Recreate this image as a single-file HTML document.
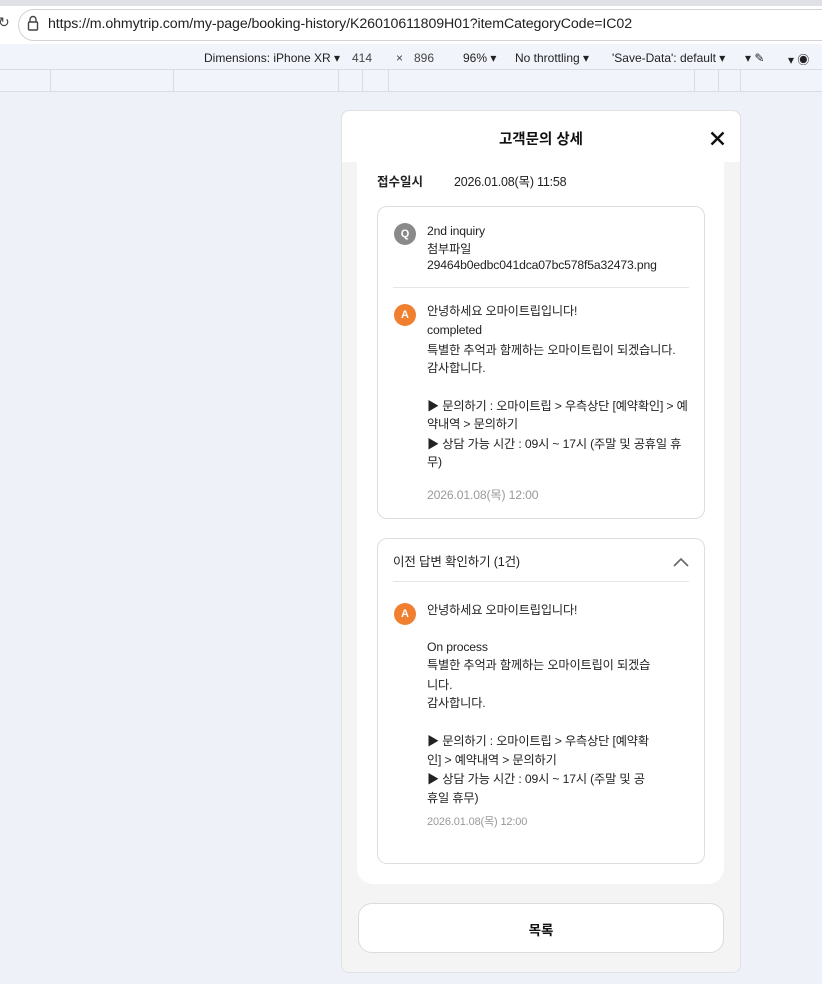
<!DOCTYPE html>
<html><head><meta charset="utf-8"><style>
*{margin:0;padding:0;box-sizing:border-box}
body{width:822px;height:984px;position:relative;background:#eef1f8;font-family:"Liberation Sans","Noto Sans CJK KR",sans-serif;color:#222;overflow:hidden}
.a{position:absolute;white-space:nowrap}
.t{position:absolute;white-space:nowrap;font-size:12.2px;letter-spacing:-0.15px;line-height:19px;color:#222}
.vl{position:absolute;top:70px;height:21px;width:1px;background:#d6dde9}
.av{position:absolute;width:22px;height:22px;border-radius:50%;color:#fff;font-weight:bold;font-size:11px;text-align:center;line-height:22px}
</style></head><body>
<div class="a" style="left:0;top:0;width:822px;height:6px;background:#dfe1e5"></div>
<div class="a" style="left:0;top:6px;width:822px;height:38px;background:#fff"></div>
<div class="a" style="left:18px;top:9px;width:820px;height:32px;border:1px solid #d0d3d8;border-radius:16px;background:#fff"></div>
<div class="a" style="left:-2px;top:14px;font-size:14px;color:#444">↻</div>
<svg class="a" style="left:27px;top:15px" width="12" height="16" viewBox="0 0 12 16"><path d="M3 7V4.5a3 3 0 0 1 6 0V7" fill="none" stroke="#444" stroke-width="1.4"/><rect x="1.5" y="7" width="9" height="8" rx="1" fill="none" stroke="#444" stroke-width="1.4"/></svg>
<div class="a" style="left:48px;top:16px;font-size:14.2px;letter-spacing:-0.1px;color:#222">https://m.ohmytrip.com/my-page/booking-history/K26010611809H01?itemCategoryCode=IC02</div>
<div class="a" style="left:0;top:44px;width:822px;height:26px;background:#f1f4fa;border-bottom:1px solid #d6dde9"></div>
<div class="a" style="left:204px;top:51px;font-size:12px;color:#222">Dimensions: iPhone XR ▾</div>
<div class="a" style="left:352px;top:51px;font-size:12px;color:#444">414</div>
<div class="a" style="left:396px;top:51px;font-size:12px;color:#444">×</div>
<div class="a" style="left:414px;top:51px;font-size:12px;color:#444">896</div>
<div class="a" style="left:463px;top:51px;font-size:12px;color:#222">96% ▾</div>
<div class="a" style="left:515px;top:51px;font-size:12px;color:#222">No throttling ▾</div>
<div class="a" style="left:612px;top:51px;font-size:12px;color:#222">'Save-Data': default ▾</div>
<div class="a" style="left:745px;top:51px;font-size:12px;color:#222">▾ ✎</div>
<div class="a" style="left:788px;top:51px;font-size:12px;color:#222">▾ ◉</div>
<div class="a" style="left:0;top:70px;width:822px;height:22px;background:#f1f4fa;border-bottom:1px solid #d6dde9"></div>
<div class="vl" style="left:50px"></div><div class="vl" style="left:173px"></div><div class="vl" style="left:338px"></div><div class="vl" style="left:362px"></div><div class="vl" style="left:388px"></div><div class="vl" style="left:694px"></div><div class="vl" style="left:718px"></div><div class="vl" style="left:740px"></div>

<div class="a" style="left:341px;top:110px;width:400px;height:863px;background:#f4f4f4;border:1px solid #e2e2e2;border-radius:8px"></div>
<div class="a" style="left:342px;top:111px;width:398px;height:51px;background:#fff;border-radius:8px 8px 0 0"></div>
<div class="a" style="left:342px;top:128px;width:398px;text-align:center;font-size:14.5px;font-weight:bold;color:#111">고객문의 상세</div>
<svg class="a" style="left:710px;top:131px" width="15" height="15" viewBox="0 0 15 15"><path d="M1.5 1.5L13.5 13.5M13.5 1.5L1.5 13.5" stroke="#111" stroke-width="2.4"/></svg>
<div class="a" style="left:357px;top:162px;width:367px;height:722px;background:#fff;border-radius:0 0 16px 16px"></div>
<div class="a" style="left:377px;top:171px;font-size:12.5px;font-weight:bold;color:#222">접수일시</div>
<div class="a" style="left:454px;top:171px;font-size:12.5px;letter-spacing:-0.2px;color:#222">2026.01.08(목) 11:58</div>

<div class="a" style="left:377px;top:206px;width:328px;height:313px;border:1px solid #dedede;border-radius:10px"></div>
<div class="av" style="left:394px;top:223px;background:#8a8a8a">Q</div>
<div class="t" style="left:427px;top:222px">2nd inquiry</div>
<div class="t" style="left:427px;top:240px">첨부파일</div>
<div class="t" style="left:427px;top:256px">29464b0edbc041dca07bc578f5a32473.png</div>
<div class="a" style="left:393px;top:287px;width:296px;height:1px;background:#e5e5e5"></div>
<div class="av" style="left:394px;top:304px;background:#f08030">A</div>
<div class="t" style="left:427px;top:302px">안녕하세요 오마이트립입니다!</div>
<div class="t" style="left:427px;top:321px">completed</div>
<div class="t" style="left:427px;top:341px">특별한 추억과 함께하는 오마이트립이 되겠습니다.</div>
<div class="t" style="left:427px;top:359px">감사합니다.</div>
<div class="t" style="left:427px;top:397px">▶ 문의하기 : 오마이트립 &gt; 우측상단 [예약확인] &gt; 예</div>
<div class="t" style="left:427px;top:415px">약내역 &gt; 문의하기</div>
<div class="t" style="left:427px;top:435px">▶ 상담 가능 시간 : 09시 ~ 17시 (주말 및 공휴일 휴</div>
<div class="t" style="left:427px;top:453px">무)</div>
<div class="t" style="left:427px;top:486px;color:#999">2026.01.08(목) 12:00</div>

<div class="a" style="left:377px;top:538px;width:328px;height:326px;border:1px solid #dedede;border-radius:10px"></div>
<div class="t" style="left:393px;top:553px;font-size:12.5px">이전 답변 확인하기 (1건)</div>
<svg class="a" style="left:673px;top:557px" width="16" height="10" viewBox="0 0 16 10"><path d="M1 9L8 2L15 9" fill="none" stroke="#666" stroke-width="1.6"/></svg>
<div class="a" style="left:393px;top:581px;width:296px;height:1px;background:#e5e5e5"></div>
<div class="av" style="left:394px;top:603px;background:#f08030">A</div>
<div class="t" style="left:427px;top:601px">안녕하세요 오마이트립입니다!</div>
<div class="t" style="left:427px;top:638px">On process</div>
<div class="t" style="left:427px;top:656px">특별한 추억과 함께하는 오마이트립이 되겠습</div>
<div class="t" style="left:427px;top:676px">니다.</div>
<div class="t" style="left:427px;top:694px">감사합니다.</div>
<div class="t" style="left:427px;top:732px">▶ 문의하기 : 오마이트립 &gt; 우측상단 [예약확</div>
<div class="t" style="left:427px;top:751px">인] &gt; 예약내역 &gt; 문의하기</div>
<div class="t" style="left:427px;top:770px">▶ 상담 가능 시간 : 09시 ~ 17시 (주말 및 공</div>
<div class="t" style="left:427px;top:789px">휴일 휴무)</div>
<div class="t" style="left:427px;top:813px;font-size:11px;color:#999">2026.01.08(목) 12:00</div>

<div class="a" style="left:358px;top:903px;width:366px;height:50px;background:#fff;border:1px solid #dcdcdc;border-radius:14px"></div>
<div class="a" style="left:358px;top:919px;width:366px;text-align:center;font-size:13.5px;font-weight:bold;color:#111">목록</div>
</body></html>
